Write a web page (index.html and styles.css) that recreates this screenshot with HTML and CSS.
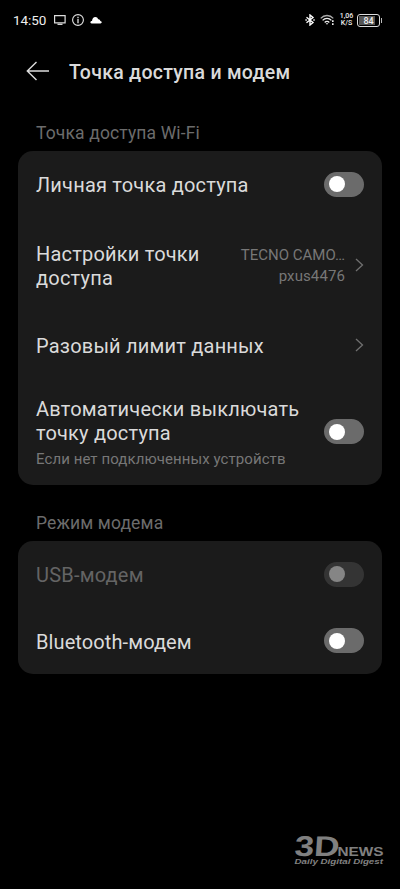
FILE: index.html
```html
<!DOCTYPE html>
<html lang="ru">
<head>
<meta charset="utf-8">
<meta name="viewport" content="width=device-width">
<title>Точка доступа и модем</title>
<link rel="stylesheet" href="styles.css">
</head>
<body>
<div class="statusbar">
  <span class="clock">14:50</span>
  <svg class="i-cast" width="12" height="12" viewBox="0 0 12 12"><path d="M.6 1.600h10.500v7.300H.6z" fill="none" stroke="#ddd" stroke-width="1.200"/><path d="M3.500 10.300h5" stroke="#ddd" stroke-width="1.300"/></svg>
  <svg class="i-info" width="12" height="12" viewBox="0 0 12 12"><circle cx="6" cy="6" r="5.400" fill="none" stroke="#e4e4e4" stroke-width="1.100"/><path d="M6 5v4.200M6 2.800v1.400" stroke="#e4e4e4" stroke-width="1.300"/></svg>
  <svg class="i-cloud" width="12" height="8" viewBox="0 0 12 8"><path d="M1.600 7.400C.7 7.400.3 6.800.4 6.100c.1-.7.800-1.200 1.600-1.200C2.300 2.600 3.500 1 5.300 1c1.500 0 2.400.9 2.800 2.200 1.300 0 2 .7 2.200 1.700.9.100 1.400.6 1.400 1.300 0 .7-.5 1.200-1.300 1.200z" fill="#fff"/></svg>
  <span class="spring"></span>
  <svg class="i-bt" width="10" height="12" viewBox="0 0 10 12"><path d="M1.500 3.200 8 8.500 5 11V1l3 2.500-6.500 5.300" fill="none" stroke="#fff" stroke-width="1.400"/><path d="M.4 6h1.400M8.300 6h1.400" stroke="#fff" stroke-width="1.300"/></svg>
  <svg class="i-wifi" width="15" height="12" viewBox="0 0 15 12"><g fill="none" stroke="#eee" stroke-width="1.300"><path d="M.7 4.400C4.200.500 9.800.500 13.300 4.400" stroke="#aaa"/><path d="M2.600 6.400c2.500-2.800 6.300-2.800 8.800 0"/><path d="M4.700 8.500c1.300-1.400 3.300-1.400 4.600 0"/></g><path d="M5.700 9.200h2.600L7 10.800zM12 6.300h1.600v1.600H12zM12 9.300h1.600v1.600H12z" fill="#eee"/></svg>
  <span class="speed"><span>1,06</span><span>K/S</span></span>
  <span class="battery"><span class="level">84</span></span>
</div>
<header class="topbar">
  <svg width="24" height="20" viewBox="0 0 24 20"><path d="M10.500 1 1.300 10l9.200 9M1.300 10H23" fill="none" stroke="#ddd" stroke-width="1.400"/></svg>
  <h1>Точка доступа и модем</h1>
</header>
<main>
  <h2 class="first">Точка доступа Wi-Fi</h2>
  <section class="card">
    <div class="row"><span class="label">Личная точка доступа</span><span class="switch"></span></div>
    <div class="row network"><span class="label">Настройки точки<br>доступа</span><span class="value"><span class="ssid">TECNO CAMO…</span><br>pxus4476</span><svg class="chev" width="9" height="14" viewBox="0 0 9 14"><path d="m1 1 6.500 6L1 13" fill="none" stroke="#707070" stroke-width="1.300"/></svg></div>
    <div class="row"><span class="label">Разовый лимит данных</span><svg class="chev" width="9" height="14" viewBox="0 0 9 14"><path d="m1 1 6.500 6L1 13" fill="none" stroke="#707070" stroke-width="1.300"/></svg></div>
    <div class="row auto"><div><span class="label">Автоматически выключать<br>точку доступа</span><p class="sub">Если нет подключенных устройств</p></div><span class="switch"></span></div>
  </section>
  <h2 class="second">Режим модема</h2>
  <section class="card">
    <div class="row disabled"><span class="label">USB-модем</span><span class="switch"></span></div>
    <div class="row bluetooth"><span class="label">Bluetooth-модем</span><span class="switch"></span></div>
  </section>
</main>
<footer>
  <svg width="94" height="50" viewBox="0 -10 94 50" fill="#808080">
    <text transform="translate(2 23) skewX(-4)" font-family="Liberation Sans" font-size="28.500" font-weight="bold" textLength="45" lengthAdjust="spacingAndGlyphs">3D</text>
    <text x="45.500" y="22.500" font-family="Liberation Sans" font-size="12" font-weight="bold" textLength="46" lengthAdjust="spacingAndGlyphs">NEWS</text>
    <text x="2.500" y="31" font-family="Liberation Sans" font-size="7.500" font-weight="bold" font-style="italic" textLength="88.500" lengthAdjust="spacingAndGlyphs">Daily Digital Digest</text>
  </svg>
</footer>
</body>
</html>
```
FILE: styles.css
```css
* { box-sizing: border-box; }
body {
  margin: 0;
  height: 889px;
  overflow: hidden;
  display: flex;
  flex-direction: column;
  background: #000;
  color: #dadada;
  font-family: Roboto, "Liberation Sans", sans-serif;
}
svg { display: block; flex: none; }
.statusbar {
  height: 40px;
  padding: 0 20px 0 13px;
  display: flex;
  align-items: center;
  color: #eee;
}
.clock { width: 34px; font-size: 13.500px; line-height: 16px; margin: 0 7px 0 0; letter-spacing: -0.1px; }
.i-info { margin-left: 6px; }
.i-cloud { margin-left: 6px; }
.spring { flex: 1; }
.i-wifi { margin-left: 5px; }
.speed {
  width: 15px;
  margin: 0 3px 0 4px;
  display: flex;
  flex-direction: column;
  align-items: center;
  font-size: 7px;
  font-weight: 500;
  line-height: 7px;
}
.battery {
  position: relative;
  width: 23px;
  height: 13px;
  padding: 1px;
  border: 1px solid #ddd;
  border-radius: 3px;
}
.battery::after {
  content: "";
  position: absolute;
  right: -3px;
  top: 3px;
  width: 1px;
  height: 5px;
  background: #bbb;
}
.level {
  display: block;
  height: 9px;
  background: linear-gradient(90deg, #555 84%, #000 84%);
  font-size: 9px;
  font-weight: 500;
  line-height: 10px;
  text-align: center;
}
.topbar {
  height: 62px;
  padding-left: 26px;
  display: flex;
  align-items: center;
}
h1 {
  margin: 3px 0 0 19px;
  font-size: 19.500px;
  font-weight: 500;
  line-height: 24px;
  letter-spacing: 0.27px;
}
main { padding: 0 18px; }
h2 {
  margin: 0;
  padding-left: 18px;
  font-size: 17.500px;
  font-weight: 400;
  line-height: 20px;
  letter-spacing: 0.13px;
  color: #6c6c6c;
}
.first { padding-top: 21px; height: 49px; }
.second { padding-top: 28px; height: 56px; }
.card {
  background: #1b1b1b;
  border-radius: 15px;
}
.row {
  height: 66.500px;
  padding: 2px 18px 0;
  display: flex;
  align-items: center;
  justify-content: space-between;
}
.network { height: 94px; }
.auto { height: 107px; padding-top: 1px; }
.label {
  display: block;
  font-size: 20px;
  line-height: 24px;
  letter-spacing: 0.2px;
  white-space: nowrap;
}
.bluetooth .label { letter-spacing: 0.1px; }
.chev { margin-top: -2px; }
.sub {
  margin: 5px 0 0;
  font-size: 15px;
  line-height: 18px;
  letter-spacing: 0.08px;
  color: #777;
}
.value {
  margin-left: auto;
  margin-right: 10px;
  font-size: 15px;
  line-height: 21px;
  letter-spacing: 0.1px;
  text-align: right;
  color: #777;
}
.ssid { letter-spacing: 0; }
.switch {
  width: 40px;
  height: 25px;
  margin: -2px 0 0;
  padding: 4.500px;
  border-radius: 13px;
  background: #6b6b6b;
}
.switch::before {
  content: "";
  display: block;
  width: 16px;
  height: 16px;
  border-radius: 50%;
  background: #fff;
}
.auto .switch { margin-top: -1px; }
.disabled .label { color: #646464; }
.disabled .switch { background: #343434; }
.disabled .switch::before { background: #858585; }
footer {
  margin-top: auto;
  height: 66px;
  padding-left: 292px;
}
```
